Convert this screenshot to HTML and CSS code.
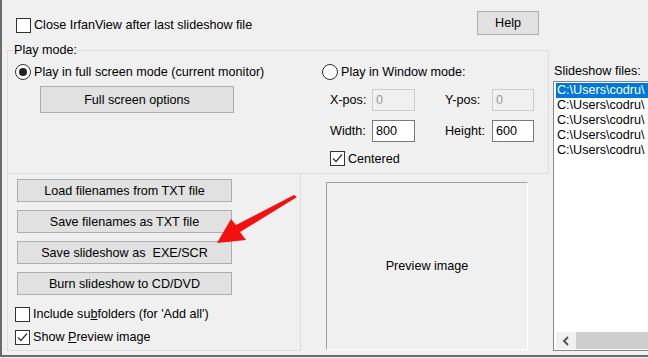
FILE: index.html
```html
<!DOCTYPE html>
<html lang="en">
<head>
    <meta charset="UTF-8">
    <title>Slideshow</title>
    <link rel="stylesheet" href="styles.css">
</head>
<body>
<div class="window">

    <div class="top-row">
        <label class="check close-check"><span class="box"></span><span>Close IrfanView after last slideshow file</span></label>
        <button class="btn help">Help</button>
    </div>

    <div class="main">
        <div class="left">
            <fieldset class="play">
                <legend>Play mode:</legend>
                <div class="fs-col">
                    <label class="radio"><span class="dot on"></span><span>Play in full screen mode (current monitor)</span></label>
                    <button class="btn fs-btn">Full screen options</button>
                </div>
                <div class="win-col">
                    <label class="radio"><span class="dot"></span><span>Play in Window mode:</span></label>
                    <div class="pos-grid">
                        <span>X-pos:</span><input class="field" disabled value="0">
                        <span>Y-pos:</span><input class="field" disabled value="0">
                        <span>Width:</span><input class="field" value="800">
                        <span>Height:</span><input class="field" value="600">
                    </div>
                    <label class="check centered"><span class="box">
                        <svg width="13" height="13" viewBox="0 0 13 13"><polyline points="2,6.5 5,9.5 11,2.5" fill="none" stroke="#333" stroke-width="1.2"/></svg>
                    </span><span>Centered</span></label>
                </div>
            </fieldset>

            <div class="lower">
                <div class="actions">
                    <button class="btn wide">Load filenames from TXT file</button>
                    <button class="btn wide">Save filenames as TXT file</button>
                    <button class="btn wide">Save slideshow as &nbsp;EXE/SCR</button>
                    <button class="btn wide">Burn slideshow to CD/DVD</button>
                    <label class="check first"><span class="box"></span><span>Include su<u>b</u>folders (for 'Add all')</span></label>
                    <label class="check"><span class="box">
                        <svg width="13" height="13" viewBox="0 0 13 13"><polyline points="2,6.5 5,9.5 11,2.5" fill="none" stroke="#333" stroke-width="1.2"/></svg>
                    </span><span>Show <u>P</u>review image</span></label>
                </div>
                <div class="preview">Preview image</div>
            </div>
        </div>

        <div class="right">
            <div class="files-label">Slideshow files:</div>
            <div class="listbox">
                <ul class="items">
                    <li class="sel">C:\Users\codru\</li>
                    <li>C:\Users\codru\</li>
                    <li>C:\Users\codru\</li>
                    <li>C:\Users\codru\</li>
                    <li>C:\Users\codru\</li>
                </ul>
                <div class="hscroll">
                    <span class="arrow-btn">
                        <svg width="8" height="10" viewBox="0 0 8 10"><polyline points="6,1 2,5 6,9" fill="none" stroke="#505050" stroke-width="1.8"/></svg>
                    </span>
                    <span class="thumb"></span>
                </div>
            </div>
        </div>
    </div>

    <!-- red annotation arrow -->
    <svg class="pointer" width="100" height="60" viewBox="200 190 100 60">
        <polygon points="217,243 231,219 236,225 294,195 297,197 240,232 246,240" fill="#f31010"/>
    </svg>
</div>
</body>
</html>
```

FILE: styles.css
```css
body {
    margin: 0;
    background: #f0f0f0;
    font-family: "Liberation Sans", Arial, sans-serif;
    font-size: 12.6px;
    color: #000;
}

.window {
    position: relative;
    width: 648px;
    height: 357px;
    box-sizing: border-box;
    border-left: 2px solid #6b6b6b;
    border-bottom: 2px solid #6b6b6b;
    overflow: hidden;
}

.btn {
    font: inherit;
    color: #000;
    background: #e1e1e1;
    border: 1px solid #adadad;
    padding: 0;
    margin: 0;
    box-sizing: border-box;
}

.check, .radio {
    display: flex;
    align-items: center;
    height: 16px;
    line-height: 16px;
    white-space: nowrap;
}

.box {
    width: 15px;
    height: 15px;
    box-sizing: border-box;
    border: 1px solid #333;
    background: #fff;
    margin-right: 3px;
    display: flex;
    align-items: center;
    justify-content: center;
    flex: none;
}

.dot {
    width: 16px;
    height: 16px;
    box-sizing: border-box;
    border: 1px solid #333;
    border-radius: 50%;
    background: #fff;
    margin-right: 3px;
    display: flex;
    align-items: center;
    justify-content: center;
    flex: none;
}

.dot.on::after {
    content: "";
    width: 8px;
    height: 8px;
    border-radius: 50%;
    background: #222;
}

/* top row */
.top-row {
    display: flex;
    align-items: flex-start;
    justify-content: space-between;
    margin-top: 11px;
    height: 24px;
    padding-left: 14px;
    padding-right: 109px;
}

.close-check {
    margin-top: 6px;
}

.help {
    width: 62px;
    height: 24px;
}

/* main area */
.main {
    display: flex;
    margin-top: 7px;
}

.left {
    width: 542px;
    margin-left: 5px;
    flex: none;
}

.play {
    margin: 0;
    padding: 0 0 7px 0;
    border: 1px solid #dcdcdc;
    display: flex;
    align-items: flex-start;
}

.play legend {
    margin-left: 6px;
    padding: 0;
    line-height: 16px;
}

.fs-col {
    width: 314px;
    padding-top: 5px;
    padding-left: 7px;
    box-sizing: border-box;
    flex: none;
}

.fs-col .radio {
    height: 17px;
}

.fs-btn {
    display: block;
    width: 194px;
    height: 27px;
    margin: 6px 0 0 25px;
}

.win-col {
    padding-top: 6px;
}

.pos-grid {
    display: grid;
    grid-template-columns: 42px 43px 77px 42px;
    grid-auto-rows: 22px;
    row-gap: 9px;
    margin: 9px 0 0 8px;
    align-items: center;
}

.pos-grid span:nth-of-type(2), .pos-grid span:nth-of-type(4) {
    margin-left: 30px;
}

.field {
    font: inherit;
    width: 100%;
    height: 22px;
    box-sizing: border-box;
    border: 1px solid #7a7a7a;
    background: #fff;
    padding: 0 3px;
    margin: 0;
    color: #000;
}

.field:disabled {
    border-color: #cccccc;
    background: #f0f0f0;
    color: #9a9a9a;
}

.centered {
    margin: 9px 0 0 8px;
    height: 15px;
}

/* lower area */
.lower {
    display: flex;
    align-items: flex-start;
}

.actions {
    width: 294px;
    height: 177px;
    box-sizing: border-box;
    border: 1px solid #dcdcdc;
    border-top: 0;
    padding: 5px 0 0 7px;
    display: flex;
    flex-direction: column;
    gap: 8px;
}

.wide {
    width: 215px;
    height: 23px;
    margin-left: 2px;
    flex: none;
}

.actions .first {
    margin-top: 3px;
}

.actions .check + .check {
    margin-top: -1px;
}

.preview {
    width: 202px;
    height: 168px;
    margin: 8px 0 0 25px;
    box-sizing: border-box;
    border: 1px solid #a0a0a0;
    border-right-color: #fff;
    border-bottom-color: #fff;
    display: flex;
    align-items: center;
    justify-content: center;
}

/* slideshow files */
.right {
    margin-left: 4px;
    padding-top: 21px;
}

.files-label {
    line-height: 16px;
    padding-left: 1px;
    white-space: nowrap;
}

.listbox {
    width: 120px;
    height: 270px;
    margin-top: 2px;
    box-sizing: border-box;
    border: 1px solid #828790;
    background: #fff;
    display: flex;
    flex-direction: column;
    padding: 1px 1px 1px 2px;
}

.items {
    list-style: none;
    margin: 0;
    padding: 0;
    flex: 1;
}

.items li {
    height: 15px;
    line-height: 15px;
    padding-left: 1px;
    white-space: nowrap;
}

.items li.sel {
    background: #0078d7;
    color: #fff;
}

.hscroll {
    display: flex;
    height: 17px;
    background: #f0f0f0;
}

.arrow-btn {
    width: 20px;
    display: flex;
    align-items: center;
    justify-content: center;
}

.thumb {
    flex: 1;
    background: #cdcdcd;
}

.pointer {
    position: absolute;
    left: 198px;
    top: 190px;
}
```
